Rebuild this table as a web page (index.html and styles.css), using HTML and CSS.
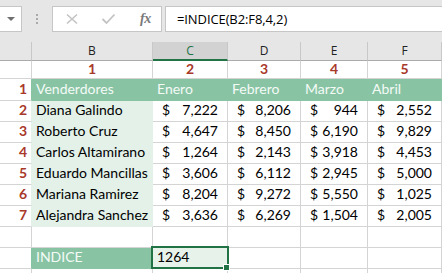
FILE: index.html
```html
<!DOCTYPE html>
<html lang="es">
<head>
<meta charset="utf-8">
<title>INDICE</title>
<link rel="stylesheet" href="styles.css">
</head>
<body>
<div class="toolbar">
  <div class="namebox"><span class="caret"></span></div>
  <div class="grip"><i></i><i></i><i></i></div>
  <div class="fxbox">
    <svg class="ico" width="14" height="12" viewBox="0 0 14 12"><path d="M2 1.5 L12 10.5 M12 1.5 L2 10.5" stroke="#c3c3c3" stroke-width="1.6" fill="none"/></svg>
    <svg class="ico" width="15" height="12" viewBox="0 0 15 12"><path d="M1.5 6 L5.5 10 L13.5 1.5" stroke="#c3c3c3" stroke-width="1.8" fill="none"/></svg>
    <span class="fx">fx</span>
  </div>
  <div class="formula">=INDICE(B2:F8,4,2)</div>
</div>
<div class="sheet">
  <div class="ch"></div><div class="ch">B</div><div class="ch sel">C</div><div class="ch">D</div><div class="ch">E</div><div class="ch">F</div>

  <div class="c nr"></div><div class="c idx">1</div><div class="c idx">2</div><div class="c idx">3</div><div class="c idx">4</div><div class="c idx">5</div>

  <div class="c rn hd-l">1</div><div class="c hd">Venderdores</div><div class="c hd">Enero</div><div class="c hd">Febrero</div><div class="c hd">Marzo</div><div class="c hd">Abril</div>

  <div class="c rn lt-l">2</div><div class="c nm">Diana Galindo</div><div class="c acc"><span>$</span><span>7,222</span></div><div class="c acc"><span>$</span><span>8,206</span></div><div class="c acc"><span>$</span><span>944</span></div><div class="c acc"><span>$</span><span>2,552</span></div>
  <div class="c rn lt-l">3</div><div class="c nm">Roberto Cruz</div><div class="c acc"><span>$</span><span>4,647</span></div><div class="c acc"><span>$</span><span>8,450</span></div><div class="c acc"><span>$</span><span>6,190</span></div><div class="c acc"><span>$</span><span>9,829</span></div>
  <div class="c rn lt-l">4</div><div class="c nm">Carlos Altamirano</div><div class="c acc"><span>$</span><span>1,264</span></div><div class="c acc"><span>$</span><span>2,143</span></div><div class="c acc"><span>$</span><span>3,918</span></div><div class="c acc"><span>$</span><span>4,453</span></div>
  <div class="c rn lt-l">5</div><div class="c nm">Eduardo Mancillas</div><div class="c acc"><span>$</span><span>3,606</span></div><div class="c acc"><span>$</span><span>6,112</span></div><div class="c acc"><span>$</span><span>2,945</span></div><div class="c acc"><span>$</span><span>5,000</span></div>
  <div class="c rn lt-l">6</div><div class="c nm">Mariana Ramirez</div><div class="c acc"><span>$</span><span>8,204</span></div><div class="c acc"><span>$</span><span>9,272</span></div><div class="c acc"><span>$</span><span>5,550</span></div><div class="c acc"><span>$</span><span>1,025</span></div>
  <div class="c rn lt-l">7</div><div class="c nm last">Alejandra Sanchez</div><div class="c acc"><span>$</span><span>3,636</span></div><div class="c acc"><span>$</span><span>6,269</span></div><div class="c acc"><span>$</span><span>1,504</span></div><div class="c acc"><span>$</span><span>2,005</span></div>

  <div class="c"></div><div class="c"></div><div class="c"></div><div class="c"></div><div class="c"></div><div class="c"></div>

  <div class="c hd-l"></div><div class="c hd">INDICE</div><div class="c active">1264</div><div class="c"></div><div class="c"></div><div class="c"></div>

  <div class="c tail"></div><div class="c tail"></div><div class="c tail"></div><div class="c tail"></div><div class="c tail"></div><div class="c tail"></div>
</div>
</body>
</html>
```
FILE: styles.css
```css
* { box-sizing: border-box; }
html, body { margin: 0; padding: 0; }
body {
  width: 442px;
  height: 273px;
  overflow: hidden;
  background: #ffffff;
  font-family: "Lato", "DejaVu Sans", sans-serif;
}

.toolbar {
  height: 42px;
  background: #e6e6e6;
  display: flex;
  align-items: flex-start;
  padding-top: 6px;
}
.namebox {
  width: 22px;
  height: 26px;
  background: #fff;
  border: 1px solid #c6c6c6;
  border-left: none;
  display: flex;
  align-items: center;
  justify-content: flex-end;
  padding-right: 6px;
}
.caret {
  width: 0; height: 0;
  border-left: 4px solid transparent;
  border-right: 4px solid transparent;
  border-top: 4px solid #6f6f6f;
}
.grip {
  width: 30px;
  height: 26px;
  display: flex;
  flex-direction: column;
  align-items: center;
  justify-content: center;
  gap: 2px;
}
.grip i {
  display: block;
  width: 2px; height: 2px;
  background: #a9a9a9;
}
.fxbox {
  width: 110px;
  height: 26px;
  background: #fff;
  border: 1px solid #c6c6c6;
  display: flex;
  align-items: center;
  padding-left: 12px;
  gap: 22px;
}
.fx {
  font-family: "Liberation Serif", serif;
  font-style: italic;
  font-weight: bold;
  font-size: 14px;
  color: #7a7a7a;
  letter-spacing: -0.5px;
  margin-left: 2px;
}
.formula {
  flex: 1;
  margin-left: 3px;
  height: 26px;
  background: #fff;
  border: 1px solid #c6c6c6;
  border-right: none;
  font-family: "Open Sans", "Noto Sans", sans-serif;
  font-size: 13px;
  letter-spacing: -0.1px;
  line-height: 24px;
  padding-left: 11px;
  color: #000;
}

.sheet {
  display: grid;
  grid-template-columns: 32px 121px 75px 73px 67px 74px;
  grid-template-rows: 19px 18px 22px repeat(8, 21px) 4px;
}
.ch {
  background: #e6e6e6;
  border-right: 1px solid #c8c8c8;
  border-bottom: 1px solid #ababab;
  font-family: "Open Sans", "Noto Sans", sans-serif;
  font-size: 12px;
  color: #222;
  display: flex;
  align-items: flex-end;
  justify-content: center;
  padding-bottom: 1px;
  line-height: 16px;
}
.ch.sel {
  background: #d2d2d2;
  color: #217346;
  border-bottom: 2px solid #217346;
  padding-bottom: 0;
}
.c {
  border-right: 1px solid #d4d4d4;
  border-bottom: 1px solid #d4d4d4;
  font-size: 14px;
  line-height: 16px;
  color: #000;
  display: flex;
  align-items: flex-end;
  padding: 0 4px 3px;
  white-space: nowrap;
  overflow: hidden;
  position: relative;
}
.idx, .rn {
  font-weight: bold;
  color: #a8392a;
}
.idx {
  justify-content: center;
  padding-bottom: 1px;
}
.rn { justify-content: flex-end; }
.tail { border-bottom: none; padding: 0; }
.hd {
  background: #88c4a4;
  border-color: #88c4a4;
  color: #f4faf6;
}
.hd-l { border-right-color: #88c4a4; }
.lt-l { border-right-color: #e3f1e9; }
.nm {
  background: #e3f1e9;
  border-color: #e3f1e9;
}
.acc {
  justify-content: space-between;
  padding: 0 9px 3px 9px;
}
.active {
  background: #e7f2eb;
  overflow: visible;
}
.active::after {
  content: "";
  position: absolute;
  left: -2px; top: -2px; right: -2px; bottom: -1px;
  border: 2px solid #217346;
}
.active::before {
  content: "";
  position: absolute;
  right: -3px; bottom: -3px;
  width: 5px; height: 5px;
  background: #217346;
  border: 1px solid #fff;
  z-index: 2;
  box-sizing: content-box;
}
```
